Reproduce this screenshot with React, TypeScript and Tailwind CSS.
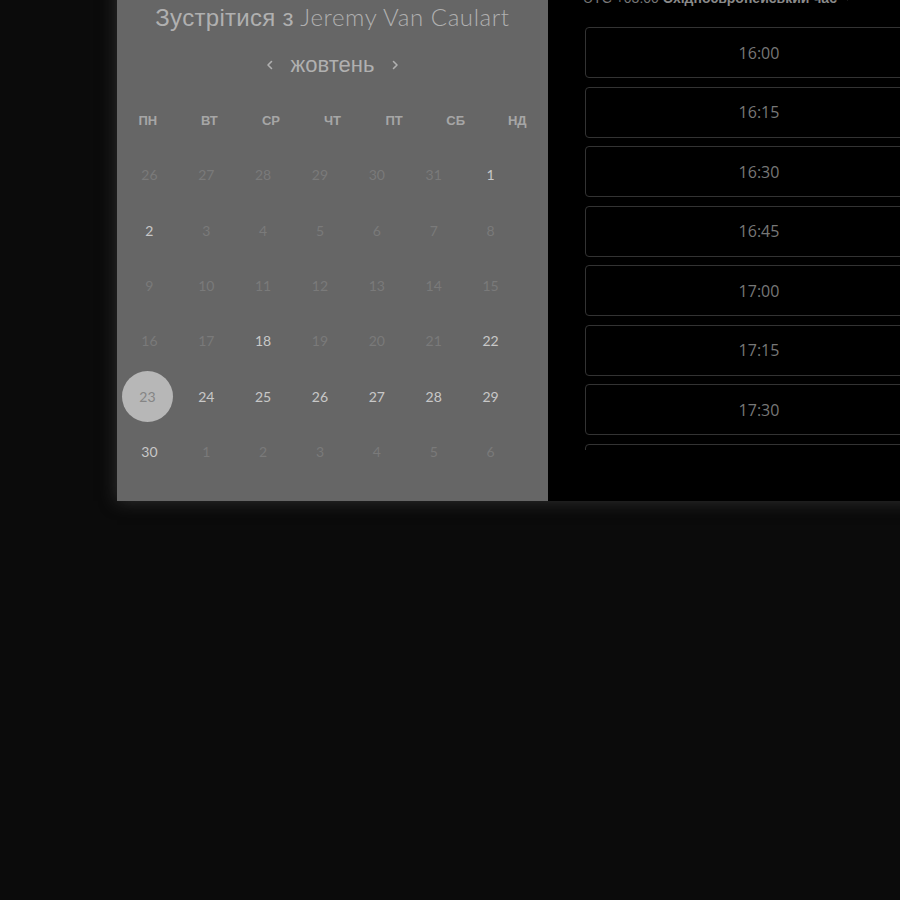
const weekdays = ["ПН", "ВТ", "СР", "ЧТ", "ПТ", "СБ", "НД"];

// [label, available, selected]
type Day = [string, boolean, boolean?];

const days: Day[] = [
  ["26", false], ["27", false], ["28", false], ["29", false], ["30", false], ["31", false], ["1", true],
  ["2", true], ["3", false], ["4", false], ["5", false], ["6", false], ["7", false], ["8", false],
  ["9", false], ["10", false], ["11", false], ["12", false], ["13", false], ["14", false], ["15", false],
  ["16", false], ["17", false], ["18", true], ["19", false], ["20", false], ["21", false], ["22", true],
  ["23", true, true], ["24", true], ["25", true], ["26", true], ["27", true], ["28", true], ["29", true],
  ["30", true], ["1", false], ["2", false], ["3", false], ["4", false], ["5", false], ["6", false],
];

const slots = ["16:00", "16:15", "16:30", "16:45", "17:00", "17:15", "17:30", "17:45"];

export default function App() {
  return (
    <div className="w-[900px] h-[900px] overflow-hidden bg-[#0b0b0b] pl-[117px]">
      <div className="-mt-[39px] flex w-[851px] shadow-[0_0_16px_rgba(60,60,60,0.8)]">
        {/* calendar side */}
        <div className="w-[431px] shrink-0 bg-[#666666] pt-[40px] pb-[22px] flex flex-col items-center font-['Lato',sans-serif]">
          <h1 className="text-[24px] leading-[32px] text-[#b0b0b0] tracking-[0.3px] whitespace-nowrap">
            <span className="font-['Liberation_Sans',sans-serif]">Зустрітися з</span>{" "}
            <span className="font-light tracking-[0.6px]">Jeremy Van Caulart</span>
          </h1>

          <div className="mt-[17px] flex items-center gap-[16px] h-[28px] text-[#b0b0b0] font-['Liberation_Sans',sans-serif]">
            <svg width="10" height="10" viewBox="0 0 10 10" fill="none" stroke="currentColor" strokeWidth="1.6">
              <path d="M6.5 1.5L3 5l3.5 3.5" strokeLinecap="round" strokeLinejoin="round" />
            </svg>
            <span className="text-[22px] leading-[28px] -mt-[1px]">жовтень</span>
            <svg width="10" height="10" viewBox="0 0 10 10" fill="none" stroke="currentColor" strokeWidth="1.6">
              <path d="M3.5 1.5L7 5 3.5 8.5" strokeLinecap="round" strokeLinejoin="round" />
            </svg>
          </div>

          <div className="mt-[34px] w-full grid grid-cols-7 text-[13px] leading-[16px] font-bold text-[#a6a6a6] font-['Liberation_Sans',sans-serif]">
            {weekdays.map((d) => (
              <div key={d} className="text-center">{d}</div>
            ))}
          </div>

          <div className="mt-[18px] self-start ml-[4px] w-[398px] grid grid-cols-7">
            {days.map(([label, available, selected], i) => (
              <div key={i} className="h-[55.4px] flex items-center justify-center">
                {selected ? (
                  <div className="w-[51px] h-[51px] -ml-[4px] rounded-full bg-[#b7b7b7] flex items-center justify-center text-[14px] text-[#858585]">
                    {label}
                  </div>
                ) : (
                  <span className={available ? "text-[14px] text-[#c8c8c8]" : "text-[14px] text-[#7a7a7a]"}>
                    {label}
                  </span>
                )}
              </div>
            ))}
          </div>
        </div>

        {/* time slots side */}
        <div className="flex-1 bg-black pt-[29px] pl-[35px] font-['Open_Sans',sans-serif]">
          <div className="flex items-center gap-[6px] text-[14px] leading-[16px] text-[#777777] font-['Liberation_Sans',sans-serif] whitespace-nowrap">
            <span>
              UTC +03:00 <span className="font-bold text-[#8a8a8a]">Східноєвропейський час</span>
            </span>
            <svg width="9" height="6" viewBox="0 0 9 6" fill="currentColor">
              <path d="M0.5 0.5h8L4.5 5.5z" />
            </svg>
          </div>

          <div className="mt-[21px] ml-[2px] h-[423px] overflow-hidden flex flex-col gap-[8.5px]">
            {slots.map((s) => (
              <div
                key={s}
                className="h-[51px] w-[348px] shrink-0 rounded-[4px] border border-[#333333] flex items-center justify-center text-[16px] text-[#777777]"
              >
                {s}
              </div>
            ))}
          </div>
          <div className="h-[51px]" />
        </div>
      </div>
    </div>
  );
}
